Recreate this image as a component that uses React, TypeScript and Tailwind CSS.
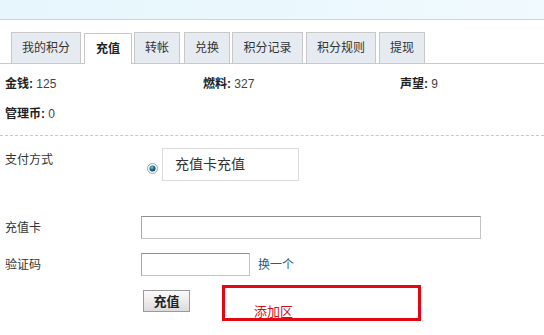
const tabs = [
  { name: "我的积分", w: "w-[70px]", ml: "ml-[11px]" },
  { name: "充值", w: "w-[48px]", ml: "ml-[3px]" },
  { name: "转帐", w: "w-[46px]", ml: "ml-[2px]" },
  { name: "兑换", w: "w-[46px]", ml: "ml-[4px]" },
  { name: "积分记录", w: "w-[71px]", ml: "ml-[2px]" },
  { name: "积分规则", w: "w-[70px]", ml: "ml-[3px]" },
  { name: "提现", w: "w-[46px]", ml: "ml-[3px]" },
]

const stats = [
  [
    { label: "金钱", value: "125" },
    { label: "燃料", value: "327" },
    { label: "声望", value: "9" },
  ],
  [{ label: "管理币", value: "0" }],
]

const Radio = () => (
  <svg width="11" height="11" viewBox="0 0 11 11" className="shrink-0">
    <defs>
      <radialGradient id="dot" cx="40%" cy="35%" r="60%">
        <stop offset="0%" stopColor="#7fd0e6" />
        <stop offset="60%" stopColor="#1b6f8c" />
        <stop offset="100%" stopColor="#0e3f55" />
      </radialGradient>
    </defs>
    <circle cx="5.5" cy="5.5" r="5" fill="#f4f6f8" stroke="#9aa6b4" strokeWidth="1" />
    <circle cx="5.5" cy="5.5" r="3" fill="url(#dot)" />
  </svg>
)

export default function App() {
  return (
    <div className="w-[544px] h-[335px] overflow-hidden bg-white text-[12px] text-[#333] font-['Liberation_Sans','Noto_Sans_CJK_SC',sans-serif]">
      {/* top band */}
      <div className="h-[20px] bg-gradient-to-r from-[#e6f6fc] via-[#eaf8fd] to-[#f1fafd] border-b border-[#cfd5d8]"></div>

      {/* tabs */}
      <div className="mt-[13px] flex items-end border-b border-[#c8c8c8] h-[31px]">
        {tabs.map((t, i) =>
          i === 1 ? (
            <div
              key={t.name}
              className={`${t.w} ${t.ml} h-[31px] mb-[-1px] flex items-center justify-center bg-white border border-b-0 border-[#c8c8c8] font-bold text-[#222] leading-none`}
            >
              {t.name}
            </div>
          ) : (
            <div
              key={t.name}
              className={`${t.w} ${t.ml} h-[31px] flex items-center justify-center bg-[#e6ebf1] border border-b-0 border-[#c8c8c8] text-[#333] leading-none`}
            >
              {t.name}
            </div>
          )
        )}
      </div>

      {/* stats */}
      <div className="pt-[5px] pb-[6px] px-[5px] border-b border-dashed border-[#c8c8c8]">
        {stats.map((row, r) => (
          <div key={r} className="grid grid-cols-[198px_197px_1fr] h-[30px] items-center">
            {row.map((s) => (
              <div key={s.label}>
                <span className="font-bold text-[#222]">{s.label}:</span>{" "}
                <span className="text-[#444]">{s.value}</span>
              </div>
            ))}
          </div>
        ))}
      </div>

      {/* form */}
      <div className="px-[5px]">
        <div className="mt-[12px] flex items-start">
          <div className="w-[136px] pt-[4px] leading-[16px]">支付方式</div>
          <div className="flex items-start pl-[6px]">
            <div className="mt-[15px]">
              <Radio />
            </div>
            <div className="ml-[4px] w-[137px] h-[33px] border border-[#dcdcdc] pl-[12px] flex items-center text-[14px] text-[#333]">
              充值卡充值
            </div>
          </div>
        </div>

        <div className="mt-[35px] flex items-center">
          <div className="w-[136px]">充值卡</div>
          <div className="w-[340px] h-[23px] border border-[#c4c4c4] border-t-[#8f8f8f] border-l-[#a8a8a8]"></div>
        </div>

        <div className="mt-[14px] flex items-center">
          <div className="w-[136px]">验证码</div>
          <div className="w-[109px] h-[23px] border border-[#c4c4c4] border-t-[#8f8f8f] border-l-[#a8a8a8]"></div>
          <span className="ml-[8px] text-[#2a5b86]">换一个</span>
        </div>

        <div className="mt-[9px] flex items-start pl-[138px]">
          <button className="mt-[5px] w-[47px] h-[22px] border border-[#9a9a9a] bg-gradient-to-b from-[#fbfbfb] to-[#dcdcdc] font-bold text-[13px] text-[#222] leading-none">
            充值
          </button>
          <div className="ml-[32px] w-[199px] h-[36px] border-[3px] border-[#e30613] pl-[29px] pt-[16px] text-[13px] leading-[15px] text-[#d0101a]">
            添加区
          </div>
        </div>
      </div>
    </div>
  )
}
